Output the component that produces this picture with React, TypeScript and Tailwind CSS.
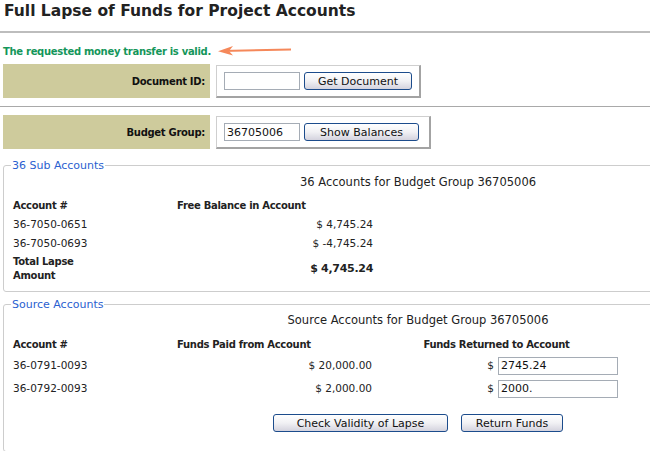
import type { ReactNode } from "react";

const subAccounts = [
  { account: "36-7050-0651", balance: "$ 4,745.24" },
  { account: "36-7050-0693", balance: "$ -4,745.24" },
];

const sourceAccounts = [
  { account: "36-0791-0093", paid: "$ 20,000.00", returned: "2745.24" },
  { account: "36-0792-0093", paid: "$ 2,000.00", returned: "2000." },
];

// bold text in the old page is narrower than DejaVu Bold, so tighten it a bit
const boldText = "font-bold text-[10px] tracking-[-0.3px]";

const XPButton = ({ children, className }: { children: ReactNode; className?: string }) => (
  <button
    className={
      "h-[18px] rounded-[3px] border border-[#1c4c8c] bg-gradient-to-b from-white via-[#f1f1f4] to-[#d4d3de] text-[11px] leading-none text-[#111] " +
      (className ?? "")
    }
  >
    {children}
  </button>
);

const TextBox = ({ value, className }: { value: string; className?: string }) => (
  <input
    readOnly
    value={value}
    className={
      "h-[18px] border border-[#a5acb5] bg-white px-[2px] text-[11px] text-[#111] outline-none " + (className ?? "")
    }
  />
);

const LookupRow = ({
  label,
  value,
  button,
  boxWidth,
  buttonWidth,
}: {
  label: string;
  value: string;
  button: string;
  boxWidth: string;
  buttonWidth: string;
}) => (
  <div className="ml-[3px] flex h-[34px] gap-[6px]">
    <div className={"flex w-[207px] items-center justify-end bg-[#cecb9c] pr-[5px] text-[#111] " + boldText}>
      {label}
    </div>
    <div
      className={
        "mt-px flex h-[33px] items-center gap-[4px] border border-[#cfcfcf] border-r-2 border-b-2 border-r-[#a3a3a3] border-b-[#a3a3a3] bg-white pl-[7px] " +
        boxWidth
      }
    >
      <TextBox value={value} className="w-[76px]" />
      <XPButton className={buttonWidth}>{button}</XPButton>
    </div>
  </div>
);

const Group = ({ legend, children }: { legend: string; children: ReactNode }) => (
  <fieldset className="ml-[3px] w-[670px] rounded-[3px] border border-[#cdcdcd] px-[9px]">
    <legend className="relative top-[1px] -ml-[2px] px-[1px] text-[11px] leading-[14px] text-[#2b5fd0]">
      {legend}
    </legend>
    {children}
  </fieldset>
);

export default function App() {
  return (
    <div className="h-[451px] w-[650px] overflow-hidden bg-white font-['DejaVu_Sans',sans-serif] text-[10.5px] text-[#222]">
      <div className="h-[31px] pl-[4px] pt-[1px] text-[15.5px] font-bold leading-[20px] text-[#222]">
        Full Lapse of Funds for Project Accounts
      </div>
      <div className="h-[2px] bg-[#bdbdbd]" />

      <div className="mt-[11px] flex h-[14px] items-center pl-[3px]">
        <span className={"text-[#14965a] " + boldText}>The requested money transfer is valid.</span>
        <svg width="76" height="12" viewBox="0 0 76 12" className="ml-[6px]">
          <path d="M5 6 L74 4.5" stroke="#f5885a" strokeWidth="2" fill="none" />
          <path d="M1 6.2 L16 1 L12 6 L16 10.5 Z" fill="#f5885a" />
        </svg>
      </div>

      <div className="mt-[6px]">
        <LookupRow label="Document ID:" value="" button="Get Document" boxWidth="w-[205px]" buttonWidth="w-[108px]" />
      </div>

      <div className="mt-[8px] h-px bg-[#a9a9a9]" />

      <div className="mt-[8px]">
        <LookupRow label="Budget Group:" value="36705006" button="Show Balances" boxWidth="w-[215px]" buttonWidth="w-[115px]" />
      </div>

      <div className="mt-[9px]">
        <Group legend="36 Sub Accounts">
          <div className="ml-[170px] mt-[3px] w-[470px] text-center text-[11.5px] leading-[14px]">
            36 Accounts for Budget Group 36705006
          </div>
          <div className={"mt-[7px] flex h-[19px] items-center " + boldText}>
            <div className="w-[164px]">Account #</div>
            <div className="w-[196px]">Free Balance in Account</div>
          </div>
          {subAccounts.map((row) => (
            <div key={row.account} className="flex h-[19px] items-center">
              <div className="w-[164px]">{row.account}</div>
              <div className="w-[196px] text-right">{row.balance}</div>
            </div>
          ))}
          <div className={"flex h-[32px] items-center leading-[14px] " + boldText}>
            <div className="w-[164px]">
              Total Lapse
              <br />
              Amount
            </div>
            <div className="w-[196px] text-right text-[11px]">$ 4,745.24</div>
          </div>
          <div className="h-[6px]" />
        </Group>
      </div>

      <div className="mt-[5px]">
        <Group legend="Source Accounts">
          <div className="ml-[170px] mt-[2px] w-[470px] text-center text-[11.5px] leading-[14px]">
            Source Accounts for Budget Group 36705006
          </div>
          <div className={"mt-[8px] flex h-[19px] items-center " + boldText}>
            <div className="w-[164px]">Account #</div>
            <div className="w-[195px]">Funds Paid from Account</div>
            <div className="w-[249px] text-center">Funds Returned to Account</div>
          </div>
          {sourceAccounts.map((row) => (
            <div key={row.account} className="flex h-[23px] items-center">
              <div className="w-[164px]">{row.account}</div>
              <div className="w-[195px] text-right">{row.paid}</div>
              <div className="flex w-[249px] items-center justify-end gap-[4px] pr-[3px]">
                <span>$</span>
                <TextBox value={row.returned} className="w-[120px]" />
              </div>
            </div>
          ))}
          <div className="mt-[14px] flex gap-[13px] pb-[19px] pl-[260px]">
            <XPButton className="w-[175px]">Check Validity of Lapse</XPButton>
            <XPButton className="w-[102px]">Return Funds</XPButton>
          </div>
        </Group>
      </div>
    </div>
  );
}
